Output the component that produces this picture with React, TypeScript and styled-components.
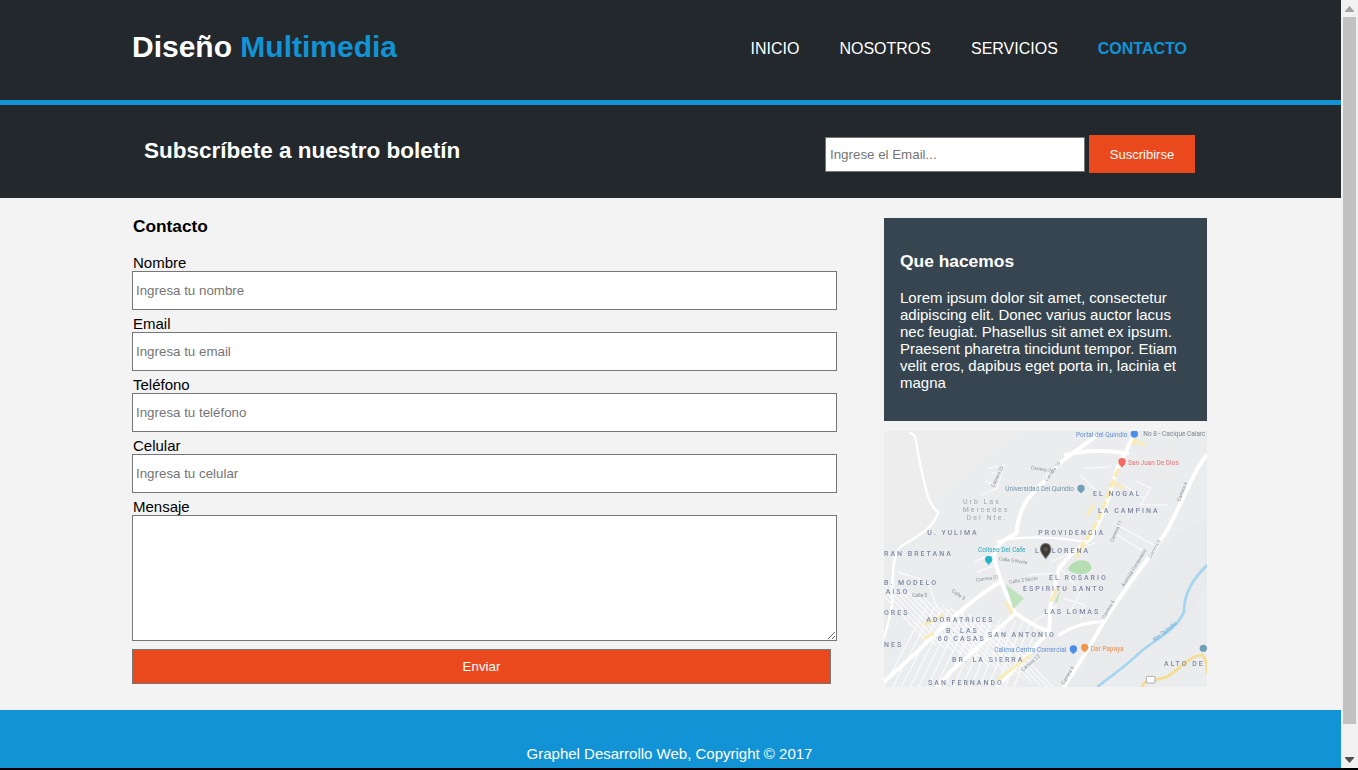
import React from "react";
import styled, { createGlobalStyle } from "styled-components";

const Global = createGlobalStyle`
  html, body { margin: 0; padding: 0; height: 770px; overflow: hidden; background: #000; }
  body { font-family: "Liberation Sans", Arial, sans-serif; }
  * { box-sizing: border-box; }
`;

const Viewport = styled.div`display: flex; width: 1358px; height: 768px; overflow: hidden;`;
const Page = styled.div`flex: 0 0 1341px; height: 768px; overflow: hidden; background: #f3f3f3; display: flex; flex-direction: column;`;
const ScrollBar = styled.div`flex: 0 0 17px; background: #f1f1f1; display: flex; flex-direction: column; align-items: center;`;
const ScrollButton = styled.div`flex: 0 0 17px; display: flex; align-items: center; justify-content: center;`;
const ScrollThumb = styled.div`width: 13px; height: 707px; background: #c1c1c1;`;
const ScrollSpacer = styled.div`flex: 1;`;

const Header = styled.header`height: 105px; background: #23282d; border-bottom: 5px solid #1193d5; padding: 0 154px 0 132px; display: flex; align-items: center; justify-content: space-between;`;
const Logo = styled.div`font-size: 30px; font-weight: 700; color: #fff; line-height: 34px; margin-top: -6px;`;
const LogoAccent = styled.span`color: #1193d5;`;
const Nav = styled.nav`display: flex; gap: 40px; margin-top: -2px;`;
const NavLink = styled.a<{ $active?: boolean }>`font-size: 16px; line-height: 18px; text-transform: uppercase; font-weight: ${p => (p.$active ? 700 : 400)}; color: ${p => (p.$active ? "#1193d5" : "#fff")};`;

const Newsletter = styled.section`height: 93px; background: #23282d; padding: 0 146px 0 144px; display: flex; align-items: center; justify-content: space-between;`;
const NewsTitle = styled.h2`margin: -2px 0 0; font-size: 22.5px; line-height: 26px; font-weight: 700; color: #fff;`;
const NewsForm = styled.form`display: flex; align-items: center; gap: 4px; margin-top: 5px;`;
const NewsInput = styled.input`width: 260px; height: 35px; border: 1px solid #767676; background: #fff; padding: 0 4px; font: 13.333px "Liberation Sans", Arial, sans-serif; outline: none; &::placeholder { color: #757575; opacity: 1; }`;
const NewsButton = styled.button`width: 106px; height: 38px; border: 0; background: #e9491d; color: #fff; font: 13px "Liberation Sans", Arial, sans-serif; padding: 0;`;

const Main = styled.main`height: 512px; padding: 20px 134px 0 132px; display: flex; justify-content: space-between;`;
const FormColumn = styled.form`width: 705px; display: flex; flex-direction: column;`;
const FormTitle = styled.h3`margin: 0 0 19px; font-size: 17.3px; line-height: 16px; font-weight: 700; color: #000; padding-left: 1px;`;
const Field = styled.div`display: flex; flex-direction: column; margin-bottom: 4px;`;
const FieldLabel = styled.label`font-size: 15px; line-height: 20px; height: 18px; color: #000; padding-left: 1px;`;
const FieldInput = styled.input`position: relative; width: 705px; height: 39px; border: 1px solid #767676; background: #fff; padding: 0 3px; font: 13.333px "Liberation Sans", Arial, sans-serif; outline: none; &::placeholder { color: #757575; opacity: 1; }`;
const FieldArea = styled.textarea`position: relative; display: block; width: 705px; height: 126px; border: 1px solid #767676; background: #fff; padding: 3px; font: 13.333px "Liberation Sans", Arial, sans-serif; outline: none; resize: both;`;
const SendButton = styled.button`width: 699px; height: 35px; margin-top: 4px; border: 1px solid #767676; background: #e9491d; color: #fff; font: 13.333px "Liberation Sans", Arial, sans-serif; padding: 0;`;

const Aside = styled.aside`width: 323px; display: flex; flex-direction: column; gap: 10px;`;
const InfoCard = styled.div`height: 203px; background: #36454f; color: #fff; padding: 33px 15px 0 16px;`;
const InfoTitle = styled.h4`margin: 0 0 17px; font-size: 17.4px; line-height: 21px; font-weight: 700;`;
const InfoText = styled.p`margin: 0; font-size: 15px; line-height: 17px;`;
const MapFrame = styled.div`width: 323px; height: 256px; background: #e9eaec; overflow: hidden;`;
const MapSvg = styled.svg`display: block; width: 323px; height: 256px;`;

const Footer = styled.footer`flex: 1; background: #1193d5; color: #fff; display: flex; justify-content: center; padding-top: 35px; padding-right: 2px; font-size: 15px; line-height: 18px;`;

const label = { fontFamily: "Roboto, sans-serif", fontWeight: 500, fontSize: 21, letterSpacing: 6, fill: "#7d89a2" };
const small = { fontFamily: "Roboto, sans-serif", fontSize: 15, fill: "#8b8f98" };

const districts: [string, number, number][] = [
  ["EL NOGAL", 627, 214], ["LA CAMPINA", 642, 264], ["U. YULIMA", 130, 331], ["PROVIDENCIA", 463, 331],
  ["RAN BRETANA", 0, 394], ["LORENA", 503, 384], ["EL ROSARIO", 495, 464], ["ESPIRITU SANTO", 417, 497],
  ["B. MODELO", 0, 479], ["AISO", 5, 507], ["ORES", 0, 570], ["ADORATRICES", 127, 592], ["B. LAS", 186, 624],
  ["60 CASAS", 161, 648], ["SAN ANTONIO", 312, 635], ["LAS LOMAS", 481, 568], ["NES", 0, 665], ["BR. LA SIERRA", 204, 711],
  ["SAN FERNANDO", 132, 780], ["ALTO DE", 840, 724],
];
const streets: [string, number, number, number][] = [
  ["Carrera 20", 440, 132, 10], ["Carrera 19", 488, 170, -52], ["Carrera 22", 330, 188, -65], ["Carrera 6", 888, 230, -68],
  ["Carrera 11", 686, 352, -65], ["Carrera 6", 800, 400, -60], ["Calle 5 Norte", 344, 406, 8], ["Carrera 21", 276, 470, -8],
  ["Calle 2 Norte", 376, 476, -8], ["Calle 5", 84, 516, 0], ["Calle 3", 202, 500, 35], ["Carrera 6", 662, 582, -60],
  ["Carrera 12", 416, 740, -40], ["Carrera 6", 540, 780, -60], ["Avenida Centenario", 720, 486, -58],
];

const gridA = Array.from({ length: 16 }, (_, i) => `M${-60 + i * 26} ${450 + i * 10}L${130 + i * 26} ${650 + i * 10}`).join("");
const gridB = Array.from({ length: 16 }, (_, i) => `M${0 + i * 26} ${786}L${130 + i * 22} ${540 + i * 4}`).join("");

function MapDrawing() {
  return (
    <MapSvg viewBox="0 18 969 768">
      <defs>
        <filter id="soft" x="-5%" y="-5%" width="110%" height="110%"><feGaussianBlur stdDeviation="2.3" /></filter>
      </defs>
      <g filter="url(#soft)">
        <rect x="-10" y="8" width="989" height="788" fill="#ebecee" />
        <path d="M0 18H420L240 150 140 250 160 265 120 330 0 360Z" fill="#ecedec" />
        <path d="M880 330L969 280V480L890 600 640 786H560L660 600Z" fill="#e9eaec" />
        <path d="M75 26C100 20 95 60 105 100 120 170 130 240 163 262 150 300 120 325 60 358 30 372 25 420 25 520 25 560 10 600 0 640" fill="none" stroke="#fff" strokeWidth="7" />
        <g fill="none" stroke="#fbfbfc" strokeWidth="3.5">
          <path d={gridA} />
          <path d={gridB} />
          <path d="M310 130L360 120 340 190 290 210M320 140L345 150M305 170L335 180M760 170L800 190 770 240 850 240M700 300L810 360M500 410L640 350M600 130L680 125M590 150L640 200M720 180L780 220" />
          <path d="M520 420L590 500 560 560M430 450L500 445M280 440L340 420M40 440L130 470 180 600M780 380L700 330M540 520L600 540 590 580M450 590L520 540M270 410L330 385M610 600L640 590" />
        </g>
        <g fill="none" stroke="#fff" strokeWidth="12" strokeLinecap="round" strokeLinejoin="round">
          <path d="M640 30C590 70 530 100 480 170 430 215 405 250 397 325 370 340 335 350 330 400 350 470 375 530 395 565 430 590 470 610 495 620" />
          <path d="M750 30L700 130 660 260 620 340 560 390 525 430 500 540 495 620 430 690 340 786" />
          <path d="M969 90C935 125 900 220 850 315 790 410 720 490 660 590 620 660 570 740 540 786" />
          <path d="M350 470C280 510 200 580 100 680L0 770" />
          <path d="M395 565L300 650 200 740 160 786" />
          <path d="M545 90C600 75 660 75 730 85" />
          <path d="M340 350C400 332 520 335 600 350" strokeWidth="7" />
          <path d="M525 630C570 600 610 590 660 590" strokeWidth="9" />
        </g>
        <path d="M755 40L745 60M720 100L690 160 665 230 640 290 610 340 590 375" fill="none" stroke="#fbeab0" strokeWidth="10" strokeDasharray="26 9" />
        <path d="M750 50L785 60M630 240L610 270M680 170L720 190M600 350L575 400M500 530L520 490M365 530L385 565M340 765L440 690M120 600L180 570M120 640L150 625" fill="none" stroke="#f9ecbc" strokeWidth="10" />
        <path d="M552 432C570 395 625 400 622 432 610 455 565 450 552 432Z" fill="#b5dfb3" />
        <path d="M365 478L420 520 388 552Z" fill="#bfe3bd" />
        <path d="M510 530L530 495 520 535Z" fill="#c4e4be" />
        <path d="M969 420C930 460 900 500 900 560 880 610 820 640 770 680 720 730 690 745 640 786" fill="none" stroke="#a3d5f0" strokeWidth="8" />
        <path d="M775 786C780 760 810 770 850 755 890 730 920 690 955 690 965 700 969 725 969 745" fill="none" stroke="#f6dc8d" strokeWidth="8" />
        <rect x="787" y="754" width="26" height="20" rx="3" fill="#fff" stroke="#888" strokeWidth="2" />
        <g {...label}>
          {districts.map(([t, x, y]) => <text key={t} x={x} y={y}>{t}</text>)}
          <text x="453" y="384">L</text>
          <text x="237" y="236" fill="#a2a6ad" fontWeight={400}>Urb Las</text>
          <text x="236" y="260" fill="#a2a6ad" fontWeight={400}>Mercedes</text>
          <text x="248" y="285" fill="#a2a6ad" fontWeight={400}>Del Nte.</text>
        </g>
        <g {...small}>
          {streets.map(([t, x, y, r]) => <text key={t + x} x={x} y={y} transform={`rotate(${r} ${x} ${y})`}>{t}</text>)}
          <text x="812" y="650" fill="#5fa9d8" fontSize={17} transform="rotate(-38 812 650)">Rio Quindio</text>
        </g>
        <g fontFamily="Roboto, sans-serif" fontSize={19.5}>
          <text x="576" y="35" fill="#5c8fd6">Portal del Quindio</text>
          <text x="778" y="33" fill="#7f8792">No 8 - Cacique Calarc</text>
          <text x="732" y="121" fill="#e57373">San Juan De Dios</text>
          <text x="364" y="199" fill="#6f93a8">Universidad Del Quindio</text>
          <text x="282" y="381" fill="#26a6b8">Coliseo Del Cafe</text>
          <text x="331" y="681" fill="#5c8fd6">Calima Centro Comercial</text>
          <text x="620" y="677" fill="#ee8c4c">Dar Papaya</text>
        </g>
        <circle cx="751" cy="27" r="11" fill="#4a8fe7" />
        <circle cx="714" cy="110" r="11" fill="#f06a63" /><path d="M705 116L714 128 723 116Z" fill="#f06a63" />
        <circle cx="591" cy="190" r="11" fill="#6f9fb8" /><path d="M583 196L591 206 599 196Z" fill="#6f9fb8" />
        <circle cx="314" cy="403" r="11" fill="#26b5c8" /><path d="M306 409L314 421 322 409Z" fill="#26b5c8" />
        <circle cx="568" cy="672" r="11" fill="#4a8fe7" /><path d="M560 678L568 688 576 678Z" fill="#4a8fe7" />
        <circle cx="602" cy="667" r="11" fill="#f29648" /><path d="M594 673L602 683 610 673Z" fill="#f29648" />
        <circle cx="958" cy="670" r="11" fill="#6f9fb8" />
      </g>
      <path d="M485 355C470 355 469 368 469 375 471 385 480 393 485 402 490 393 499 385 501 375 501 368 500 355 485 355Z" fill="#3b3a38" />
      <circle cx="485" cy="373" r="7" fill="#5a5445" />
    </MapSvg>
  );
}

const fields = [
  ["Nombre", "Ingresa tu nombre"],
  ["Email", "Ingresa tu email"],
  ["Teléfono", "Ingresa tu teléfono"],
  ["Celular", "Ingresa tu celular"],
];

export default function App() {
  return (
    <>
      <Global />
      <Viewport>
        <Page>
          <Header>
            <Logo>Diseño <LogoAccent>Multimedia</LogoAccent></Logo>
            <Nav>
              <NavLink>Inicio</NavLink>
              <NavLink>Nosotros</NavLink>
              <NavLink>Servicios</NavLink>
              <NavLink $active>Contacto</NavLink>
            </Nav>
          </Header>
          <Newsletter>
            <NewsTitle>Subscríbete a nuestro boletín</NewsTitle>
            <NewsForm>
              <NewsInput placeholder="Ingrese el Email..." />
              <NewsButton type="button">Suscribirse</NewsButton>
            </NewsForm>
          </Newsletter>
          <Main>
            <FormColumn>
              <FormTitle>Contacto</FormTitle>
              {fields.map(([l, p]) => (
                <Field key={l}>
                  <FieldLabel>{l}</FieldLabel>
                  <FieldInput placeholder={p} />
                </Field>
              ))}
              <Field>
                <FieldLabel>Mensaje</FieldLabel>
                <FieldArea />
              </Field>
              <SendButton type="button">Enviar</SendButton>
            </FormColumn>
            <Aside>
              <InfoCard>
                <InfoTitle>Que hacemos</InfoTitle>
                <InfoText>Lorem ipsum dolor sit amet, consectetur adipiscing elit. Donec varius auctor lacus nec feugiat. Phasellus sit amet ex ipsum. Praesent pharetra tincidunt tempor. Etiam velit eros, dapibus eget porta in, lacinia et magna</InfoText>
              </InfoCard>
              <MapFrame><MapDrawing /></MapFrame>
            </Aside>
          </Main>
          <Footer>Graphel Desarrollo Web, Copyright © 2017</Footer>
        </Page>
        <ScrollBar>
          <ScrollButton>
            <svg width="9" height="6" viewBox="0 0 9 6"><path d="M4.5 0L9 5V6H0V5Z" fill="#a3a3a3" /></svg>
          </ScrollButton>
          <ScrollThumb />
          <ScrollSpacer />
          <ScrollButton>
            <svg width="9" height="6" viewBox="0 0 9 6"><path d="M0 0H9V1L4.5 6 0 1Z" fill="#505050" /></svg>
          </ScrollButton>
        </ScrollBar>
      </Viewport>
    </>
  );
}
